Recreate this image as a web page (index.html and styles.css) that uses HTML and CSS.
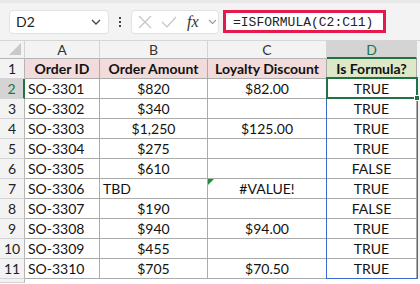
FILE: index.html
```html
<!DOCTYPE html>
<html lang="en">
<head>
  <meta charset="UTF-8" />
  <title>ISFORMULA</title>
  <link rel="stylesheet" href="styles.css">
</head>
<body>
  <div class="toolbar">
    <div class="name-box">
      <span>D2</span>
      <svg class="chev" width="10" height="6" viewBox="0 0 10 6"><path d="M1 1 L5 5 L9 1" fill="none" stroke="#444" stroke-width="1.3"/></svg>
    </div>
    <div class="dots"><i></i><i></i><i></i></div>
    <div class="fx-box">
      <svg width="14" height="14" viewBox="0 0 14 14"><path d="M1 1 L13 13 M13 1 L1 13" stroke="#c4c4c4" stroke-width="1.2"/></svg>
      <svg width="16" height="12" viewBox="0 0 16 12"><path d="M1 6 L6 11 L15 1" fill="none" stroke="#c4c4c4" stroke-width="1.2"/></svg>
      <span class="fx">fx</span>
      <svg width="9" height="6" viewBox="0 0 9 6"><path d="M1 1 L4.5 4.5 L8 1" fill="none" stroke="#999" stroke-width="1.1"/></svg>
    </div>
    <div class="formula">=ISFORMULA(C2:C11)</div>
  </div>

  <div class="sheet-wrap">
    <div class="sheet">
      <div class="corner"><span class="tri"></span></div>
      <div class="col-head">A</div>
      <div class="col-head">B</div>
      <div class="col-head">C</div>
      <div class="col-head sel">D</div>
      <div class="edge"></div>

      <div class="row-head">1</div>
      <div class="cell hd">Order ID</div>
      <div class="cell hd">Order Amount</div>
      <div class="cell hd">Loyalty Discount</div>
      <div class="cell hd green">Is Formula?</div>
      <div class="edge"></div>

      <div class="row-head sel">2</div>
      <div class="cell">SO-3301</div>
      <div class="cell mid">$820</div>
      <div class="cell mid">$82.00</div>
      <div class="cell mid">TRUE</div>
      <div class="edge"></div>

      <div class="row-head">3</div>
      <div class="cell">SO-3302</div>
      <div class="cell mid">$340</div>
      <div class="cell mid"></div>
      <div class="cell mid">TRUE</div>
      <div class="edge"></div>

      <div class="row-head">4</div>
      <div class="cell">SO-3303</div>
      <div class="cell mid">$1,250</div>
      <div class="cell mid">$125.00</div>
      <div class="cell mid">TRUE</div>
      <div class="edge"></div>

      <div class="row-head">5</div>
      <div class="cell">SO-3304</div>
      <div class="cell mid">$275</div>
      <div class="cell mid"></div>
      <div class="cell mid">TRUE</div>
      <div class="edge"></div>

      <div class="row-head">6</div>
      <div class="cell">SO-3305</div>
      <div class="cell mid">$610</div>
      <div class="cell mid"></div>
      <div class="cell mid">FALSE</div>
      <div class="edge"></div>

      <div class="row-head">7</div>
      <div class="cell">SO-3306</div>
      <div class="cell">TBD</div>
      <div class="cell mid err">#VALUE!</div>
      <div class="cell mid">TRUE</div>
      <div class="edge"></div>

      <div class="row-head">8</div>
      <div class="cell">SO-3307</div>
      <div class="cell mid">$190</div>
      <div class="cell mid"></div>
      <div class="cell mid">FALSE</div>
      <div class="edge"></div>

      <div class="row-head">9</div>
      <div class="cell">SO-3308</div>
      <div class="cell mid">$940</div>
      <div class="cell mid">$94.00</div>
      <div class="cell mid">TRUE</div>
      <div class="edge"></div>

      <div class="row-head">10</div>
      <div class="cell">SO-3309</div>
      <div class="cell mid">$455</div>
      <div class="cell mid"></div>
      <div class="cell mid">TRUE</div>
      <div class="edge"></div>

      <div class="row-head">11</div>
      <div class="cell">SO-3310</div>
      <div class="cell mid">$705</div>
      <div class="cell mid">$70.50</div>
      <div class="cell mid">TRUE</div>
      <div class="edge"></div>

      <div class="row-head"></div>
    </div>
    <div class="range"></div>
    <div class="active"><span class="handle"></span></div>
  </div>
</body>
</html>
```

FILE: styles.css
```css
* {
  box-sizing: border-box;
}

html {
  overflow: hidden;
}

body {
  margin: 0;
  width: 420px;
  height: 284px;
  overflow: hidden;
  background: #fff;
  font-family: Lato, "Open Sans", sans-serif;
  font-size: 14px;
  color: #111;
}

/* formula bar */
.toolbar {
  height: 41px;
  background: #f3f3f3;
  border-top: 3px solid #e9e9e9;
  border-bottom: 1px solid #d6d6d6;
  display: flex;
  align-items: center;
  padding: 0 0 0 9px;
}

.name-box {
  width: 100px;
  height: 24px;
  background: #fff;
  border: 1px solid #e2e2e2;
  border-radius: 4px;
  display: flex;
  align-items: center;
  justify-content: space-between;
  padding: 0 7px 0 6px;
  font-size: 14px;
  color: #222;
}

.dots {
  width: 22px;
  display: flex;
  flex-direction: column;
  align-items: center;
  gap: 2px;
}

.dots i {
  width: 2px;
  height: 2px;
  background: #444;
}

.fx-box {
  width: 88px;
  height: 24px;
  background: #fff;
  border: 1px solid #e2e2e2;
  border-radius: 4px;
  display: flex;
  align-items: center;
  gap: 9px;
  padding: 0 0 0 6px;
}

.fx {
  font-family: "Liberation Serif", serif;
  font-style: italic;
  font-size: 16px;
  color: #333;
  margin-left: 1px;
}

.formula {
  margin-left: 4px;
  width: 163px;
  height: 23px;
  border: 3px solid #e5194b;
  background: #fff;
  font-family: "Liberation Mono", monospace;
  font-size: 13px;
  color: #222;
  padding: 1px 0 0 7px;
  line-height: 17px;
}

/* grid */
.sheet-wrap {
  position: relative;
}

.sheet {
  display: grid;
  grid-template-columns: 25px 75px 108px 119px 90px 3px;
  grid-template-rows: 18px repeat(11, 20px) 4px;
}

.corner {
  background: #f3f3f3;
  border-right: 1px solid #d4d4d4;
  border-bottom: 1px solid #b5b5b5;
  position: relative;
}

.tri {
  position: absolute;
  right: 3px;
  bottom: 3px;
  width: 0;
  height: 0;
  border-left: 12px solid transparent;
  border-bottom: 12px solid #c9c9c9;
}

.col-head {
  background: #f3f3f3;
  border-right: 1px solid #d4d4d4;
  border-bottom: 1px solid #b5b5b5;
  text-align: center;
  line-height: 17px;
  color: #333;
}

.col-head.sel {
  background: #d4d4d4;
  color: #217346;
  border-bottom: 2px solid #217346;
}

.row-head {
  background: #f3f3f3;
  border-right: 1px solid #b5b5b5;
  border-bottom: 1px solid #d4d4d4;
  text-align: center;
  line-height: 19px;
  color: #222;
}

.row-head.sel {
  background: #d4d4d4;
  color: #217346;
  border-right: 2px solid #217346;
}

.edge {
  background: #f3f3f3;
}

.cell {
  border-right: 1px solid #ababab;
  border-bottom: 1px solid #ababab;
  line-height: 19px;
  padding: 0 3px;
  white-space: nowrap;
  overflow: hidden;
}

.cell.mid {
  text-align: center;
}

.cell.hd {
  background: #f2dcdb;
  font-weight: bold;
  text-align: center;
}

.cell.green {
  background: #dde8c9;
}

.cell.err {
  position: relative;
}

.cell.err::before {
  content: "";
  position: absolute;
  left: 0;
  top: 0;
  border-top: 6px solid #1f8f3a;
  border-right: 6px solid transparent;
}

/* selection overlays */
.range {
  position: absolute;
  left: 326px;
  top: 37px;
  width: 92px;
  height: 201px;
  border: 1px solid #3a6bc9;
  pointer-events: none;
}

.active {
  position: absolute;
  left: 326px;
  top: 36px;
  width: 92px;
  height: 22px;
  border: 2px solid #217346;
}

.handle {
  position: absolute;
  right: -4px;
  bottom: -4px;
  width: 6px;
  height: 6px;
  background: #217346;
  border: 1px solid #fff;
}
```
